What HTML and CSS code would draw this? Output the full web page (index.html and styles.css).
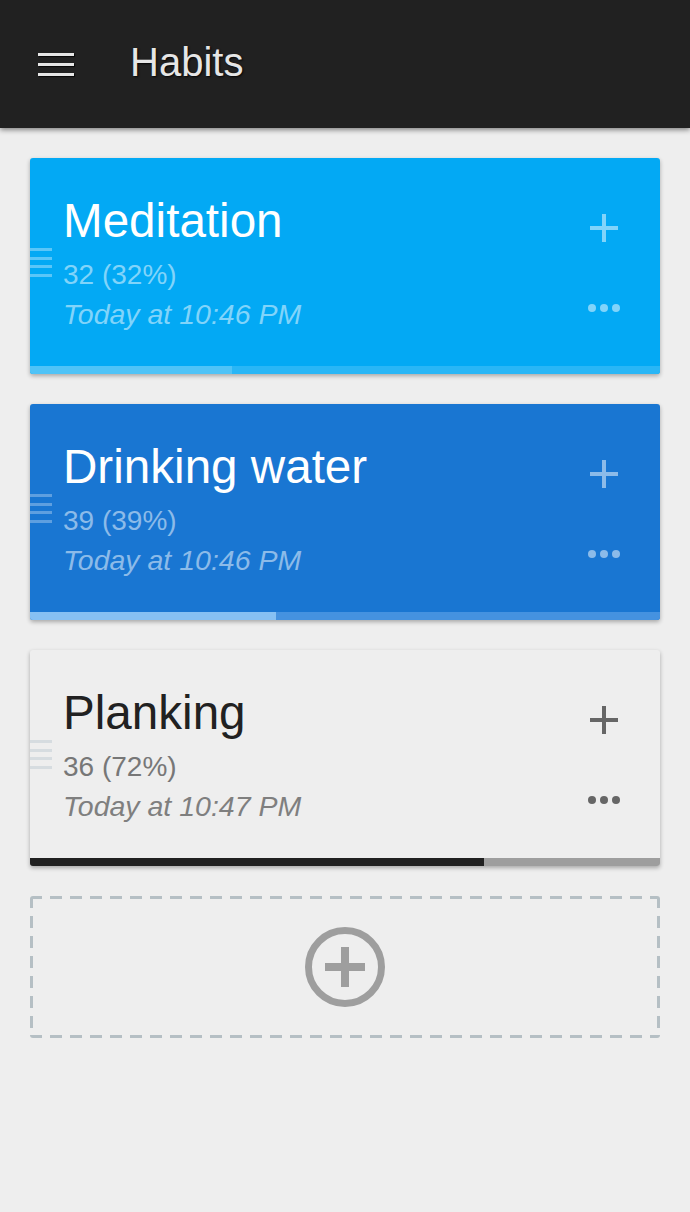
FILE: index.html
```html
<!DOCTYPE html>
<html lang="en">
<head>
<meta charset="utf-8">
<title>Habits</title>
<link rel="stylesheet" href="styles.css">
</head>
<body>
<header class="appbar">
  <div class="menu-btn" aria-label="Menu">
    <span></span><span></span><span></span>
  </div>
  <h1 class="appbar-title">Habits</h1>
</header>

<main class="list">
  <article class="card card-light-blue">
    <div class="card-body">
      <div class="handle"><span></span><span></span><span></span><span></span></div>
      <div class="info">
        <h2 class="name">Meditation</h2>
        <div class="count">32 (32%)</div>
        <div class="time">Today at 10:46 PM</div>
      </div>
      <div class="actions">
        <svg class="plus" width="28" height="28" viewBox="0 0 28 28"><rect x="12" y="0" width="4" height="28"/><rect x="0" y="12" width="28" height="4"/></svg>
        <div class="dots"><span></span><span></span><span></span></div>
      </div>
    </div>
    <div class="progress"><div class="fill" style="width:32%"></div></div>
  </article>

  <article class="card card-blue">
    <div class="card-body">
      <div class="handle"><span></span><span></span><span></span><span></span></div>
      <div class="info">
        <h2 class="name">Drinking water</h2>
        <div class="count">39 (39%)</div>
        <div class="time">Today at 10:46 PM</div>
      </div>
      <div class="actions">
        <svg class="plus" width="28" height="28" viewBox="0 0 28 28"><rect x="12" y="0" width="4" height="28"/><rect x="0" y="12" width="28" height="4"/></svg>
        <div class="dots"><span></span><span></span><span></span></div>
      </div>
    </div>
    <div class="progress"><div class="fill" style="width:39%"></div></div>
  </article>

  <article class="card card-grey">
    <div class="card-body">
      <div class="handle"><span></span><span></span><span></span><span></span></div>
      <div class="info">
        <h2 class="name">Planking</h2>
        <div class="count">36 (72%)</div>
        <div class="time">Today at 10:47 PM</div>
      </div>
      <div class="actions">
        <svg class="plus" width="28" height="28" viewBox="0 0 28 28"><rect x="12" y="0" width="4" height="28"/><rect x="0" y="12" width="28" height="4"/></svg>
        <div class="dots"><span></span><span></span><span></span></div>
      </div>
    </div>
    <div class="progress"><div class="fill" style="width:72%"></div></div>
  </article>

  <div class="add-box">
    <svg width="80" height="80" viewBox="0 0 80 80" class="add-icon">
      <circle cx="40" cy="40" r="36.5" fill="none" stroke="#9e9e9e" stroke-width="7"/>
      <rect x="20" y="36" width="40" height="8" fill="#9e9e9e"/>
      <rect x="36" y="20" width="8" height="40" fill="#9e9e9e"/>
    </svg>
  </div>
</main>
</body>
</html>
```

FILE: styles.css
```css
* { box-sizing: border-box; }

html, body {
  margin: 0;
  padding: 0;
}

body {
  background: #eeeeee;
  font-family: "Liberation Sans", Arial, Helvetica, sans-serif;
  min-height: 1212px;
}

.appbar {
  height: 128px;
  background: #212121;
  display: flex;
  align-items: center;
  padding-left: 38px;
  box-shadow: 0 2px 5px rgba(0, 0, 0, 0.45);
  position: relative;
  z-index: 1;
}

.menu-btn {
  width: 36px;
  display: flex;
  flex-direction: column;
  gap: 7px;
  margin-top: 1px;
}

.menu-btn span {
  display: block;
  height: 3px;
  background: #e6e6e6;
  box-shadow: 1px 1px 1px rgba(0, 0, 0, 0.8);
}

.appbar-title {
  margin: -4px 0 0 56px;
  font-weight: normal;
  font-size: 40px;
  color: #e6e6e6;
  line-height: 1;
  text-shadow: 1px 1px 2px rgba(0, 0, 0, 0.9);
}

.list {
  padding: 30px;
  display: flex;
  flex-direction: column;
  gap: 30px;
}

.card {
  height: 216px;
  border-radius: 3px;
  overflow: hidden;
  box-shadow: 0 2px 4px rgba(0, 0, 0, 0.3);
  display: flex;
  flex-direction: column;
}

.card-body {
  flex: 1;
  display: flex;
  padding-right: 38px;
}

.handle {
  width: 22px;
  margin-top: 90px;
  display: flex;
  flex-direction: column;
  gap: 5.5px;
  align-self: flex-start;
}

.handle span {
  display: block;
  height: 3px;
}

.info {
  flex: 1;
  padding-left: 11px;
  padding-top: 35px;
  min-width: 0;
}

.name {
  margin: 0;
  font-weight: normal;
  font-size: 47.6px;
  line-height: 56px;
  white-space: nowrap;
}

.count {
  font-size: 28px;
  line-height: 51px;
}

.time {
  font-size: 28.5px;
  line-height: 28px;
  font-style: italic;
}

.actions {
  width: 36px;
  padding-top: 56px;
  display: flex;
  flex-direction: column;
  align-items: center;
}

.plus { display: block; }

.dots {
  margin-top: 62px;
  display: flex;
  gap: 4px;
}

.dots span {
  width: 8px;
  height: 8px;
  border-radius: 50%;
}

.progress {
  height: 8px;
  flex: none;
}

.fill {
  height: 100%;
}

/* Light blue card */
.card-light-blue { background: #03a9f4; }
.card-light-blue .name { color: #ffffff; }
.card-light-blue .count,
.card-light-blue .time { color: #81d4fa; }
.card-light-blue .plus { fill: #81d4fa; }
.card-light-blue .dots span { background: #81d4fa; }
.card-light-blue .handle span { background: #5ac6f8; }
.card-light-blue .progress { background: #29b6f6; }
.card-light-blue .fill { background: #4fc3f7; }

/* Blue card */
.card-blue { background: #1976d2; }
.card-blue .name { color: #ffffff; }
.card-blue .count,
.card-blue .time { color: #8cbbe9; }
.card-blue .plus { fill: #8cbbe9; }
.card-blue .dots span { background: #8cbbe9; }
.card-blue .handle span { background: #5e9fe0; }
.card-blue .progress { background: #4592e0; }
.card-blue .fill { background: #86c0f3; }

/* Grey card */
.card-grey { background: #eeeeee; }
.card-grey .name { color: #212121; }
.card-grey .count { color: #777777; }
.card-grey .time { color: #7f7f7f; }
.card-grey .plus { fill: #666666; }
.card-grey .dots span { background: #666666; }
.card-grey .handle span { background: #d6dce0; }
.card-grey .progress { background: #9e9e9e; }
.card-grey .fill { background: #212121; }

.add-box {
  height: 142px;
  border-radius: 3px;
  display: flex;
  align-items: center;
  justify-content: center;
  background:
    repeating-linear-gradient(90deg, #b5bfc4 0 12px, transparent 12px 20px) left top / 100% 3px no-repeat,
    repeating-linear-gradient(90deg, #b5bfc4 0 12px, transparent 12px 20px) left bottom / 100% 3px no-repeat,
    repeating-linear-gradient(180deg, #b5bfc4 0 12px, transparent 12px 20px) left top / 3px 100% no-repeat,
    repeating-linear-gradient(180deg, #b5bfc4 0 12px, transparent 12px 20px) right top / 3px 100% no-repeat;
}

.add-icon { display: block; }
```
